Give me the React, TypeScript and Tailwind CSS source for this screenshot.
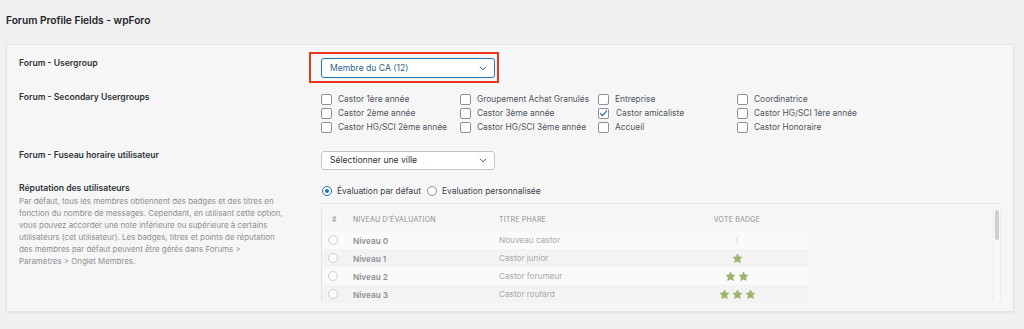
import React from "react";

const font = { fontFamily: "Inter, 'Noto Sans', sans-serif" };

function Chevron({ color = "#50575e" }: { color?: string }) {
  return (
    <svg width="8" height="5" viewBox="0 0 9 6" fill="none">
      <path d="M1 1.2 L4.5 4.6 L8 1.2" stroke={color} strokeWidth="1.2" strokeLinecap="round" strokeLinejoin="round" />
    </svg>
  );
}

function Checkbox({ checked = false }: { checked?: boolean }) {
  return (
    <span className="flex h-[11px] w-[11px] shrink-0 items-center justify-center rounded-[2px] border border-[#8c8f94] bg-white">
      {checked && (
        <svg width="9" height="9" viewBox="0 0 10 10">
          <path d="M1.8 5.2 L4 7.4 L8.4 2" stroke="#2271b1" strokeWidth="1.4" fill="none" strokeLinecap="round" strokeLinejoin="round" />
        </svg>
      )}
    </span>
  );
}

function Star({ size = 11 }: { size?: number }) {
  return (
    <svg width={size} height={size} viewBox="0 0 24 24">
      <path
        d="M12 2.5 L14.9 8.6 L21.5 9.4 L16.6 14 L17.9 20.6 L12 17.3 L6.1 20.6 L7.4 14 L2.5 9.4 L9.1 8.6 Z"
        fill="#9db56b"
        stroke="#9db56b"
        strokeWidth="2"
        strokeLinejoin="round"
      />
    </svg>
  );
}

function FaintStar() {
  return (
    <svg width="8" height="10" viewBox="0 0 8 10">
      <path d="M5.5 1.5 L3.2 4.2 L5 5.2 L3.6 8.6" stroke="#d6d6d6" strokeWidth="0.9" fill="none" strokeLinecap="round" />
    </svg>
  );
}

const groups: [string, boolean][][] = [
  [["Castor 1ère année", false], ["Castor 2ème année", false], ["Castor HG/SCI 2ème année", false]],
  [["Groupement Achat Granulés", false], ["Castor 3ème année", false], ["Castor HG/SCI 3ème année", false]],
  [["Entreprise", false], ["Castor amicaliste", true], ["Accueil", false]],
  [["Coordinatrice", false], ["Castor HG/SCI 1ère année", false], ["Castor Honoraire", false]],
];
const colWidths = ["w-[139px]", "w-[138px]", "w-[139px]", "w-[140px]"];

const levels = [
  { n: "Niveau 0", t: "Nouveau castor", stars: 0, bg: "bg-[#fafafa]" },
  { n: "Niveau 1", t: "Castor junior", stars: 1, bg: "bg-[#f3f3f3]" },
  { n: "Niveau 2", t: "Castor forumeur", stars: 2, bg: "bg-[#fafafa]" },
  { n: "Niveau 3", t: "Castor routard", stars: 3, bg: "bg-[#f3f3f3]" },
];

const descLines = [
  "Par défaut, tous les membres obtiennent des badges et des titres en",
  "fonction du nombre de messages. Cependant, en utilisant cette option,",
  "vous pouvez accorder une note inférieure ou supérieure à certains",
  "utilisateurs (cet utilisateur). Les badges, titres et points de réputation",
  "des membres par défaut peuvent être gérés dans Forums >",
  "Paramètres > Onglet Membres.",
];

export default function App() {
  return (
    <div style={font} className="h-[329px] w-[1024px] overflow-hidden bg-[#f0f0f1] px-[6px]">
      <div className="pt-[13px] text-[10.2px] font-semibold leading-[14px] text-[#1d2327]">
        Forum Profile Fields - wpForo
      </div>

      <div className="mt-[17px] h-[268px] w-[1008px] overflow-hidden border border-[#e4e4e4] bg-[#f6f6f6] pl-[12px] shadow-[0_1px_2px_rgba(0,0,0,0.06)]">
        {/* Row 1 */}
        <div className="mt-[12px] flex">
          <div className="w-[302px] text-[8.6px] font-semibold leading-[12px] text-[#2c3338]">Forum - Usergroup</div>
          <div className="relative mt-[1px]">
            <div className="flex h-[20px] w-[174px] items-center justify-between rounded-[3px] border border-[#2271b1] bg-white pl-[8px] pr-[7px] text-[8.6px] text-[#2c5f8f]">
              <span>Membre du CA (12)</span>
              <Chevron color="#2c5f8f" />
            </div>
            <div className="pointer-events-none absolute left-[-12px] top-[-6px] h-[31px] w-[190px] border-2 border-[#e8361f]" />
          </div>
        </div>

        {/* Row 2 */}
        <div className="mt-[13px] flex">
          <div className="w-[302px] text-[8.6px] font-semibold leading-[12px] text-[#2c3338]">
            Forum - Secondary Usergroups
          </div>
          <div className="flex pt-[1px]">
            {groups.map((col, ci) => (
              <div key={ci} className={`${colWidths[ci]} flex flex-col`}>
                {col.map(([label, checked]) => (
                  <div key={label} className="flex h-[14px] items-center gap-[6px] text-[8.4px] text-[#50575e]">
                    <Checkbox checked={checked} />
                    <span className={checked ? "ml-[1px]" : ""}>{label}</span>
                  </div>
                ))}
              </div>
            ))}
          </div>
        </div>

        {/* Row 3 */}
        <div className="mt-[17px] flex">
          <div className="-mt-[2px] w-[302px] text-[8.6px] font-semibold leading-[12px] text-[#2c3338]">
            Forum - Fuseau horaire utilisateur
          </div>
          <div className="flex h-[19px] w-[174px] items-center justify-between rounded-[3px] border border-[#c3c4c7] bg-white pl-[8px] pr-[7px] text-[8.6px] text-[#2c3338]">
            <span>Sélectionner une ville</span>
            <Chevron />
          </div>
        </div>

        {/* Row 4 */}
        <div className="mt-[12px] flex">
          <div className="w-[302px]">
            <div className="text-[8.6px] font-semibold leading-[12px] text-[#2c3338]">Réputation des utilisateurs</div>
            <div className="mt-[1px] text-[7.9px] leading-[12px] text-[#8c8f94]">
              {descLines.map((l) => (
                <div key={l}>{l}</div>
              ))}
            </div>
          </div>
          <div className="w-[681px]">
            <div className="flex h-[15px] items-center pl-[1px] pt-[3px] text-[8.4px] text-[#3c434a]">
              <span className="flex h-[10px] w-[10px] items-center justify-center rounded-full border border-[#2271b1] bg-white">
                <span className="h-[4px] w-[4px] rounded-full bg-[#2271b1]" />
              </span>
              <span className="ml-[5px]">Évaluation par défaut</span>
              <span className="ml-[6px] h-[10px] w-[10px] rounded-full border border-[#8c8f94] bg-white" />
              <span className="ml-[5px]">Evaluation personnalisée</span>
            </div>
            <div className="mt-[6px] border-t border-dotted border-[#d8d8d8]" />
            <div className="mt-[5px] flex h-[92px]">
              <div className="w-[488px] border-l border-[#e2e2e2]">
                <div className="flex h-[22px] items-center text-[7px] uppercase tracking-[0.2px] text-[#8c8f94]">
                  <span className="w-[31px] pl-[10px]">#</span>
                  <span className="w-[146px]">Niveau d'évaluation</span>
                  <span className="w-[190px]">Titre phare</span>
                  <span className="w-[96px] text-center">Vote badge</span>
                </div>
                {levels.map((lv) => (
                  <div key={lv.n} className={`flex h-[18px] items-center ${lv.bg}`}>
                    <span className="flex w-[31px] pl-[6px]">
                      <span className="h-[10px] w-[10px] rounded-full border border-[#d0d0d0] bg-[#fbfbfb]" />
                    </span>
                    <span className="w-[146px] pt-[2px] text-[8.2px] font-semibold text-[#8c8f94]">{lv.n}</span>
                    <span className="w-[190px] text-[8.2px] text-[#a7aaad]">{lv.t}</span>
                    <span className="flex w-[96px] justify-center gap-[2px]">
                      {lv.stars === 0 ? <FaintStar /> : Array.from({ length: lv.stars }).map((_, i) => <Star key={i} />)}
                    </span>
                  </div>
                ))}
              </div>
              <div className="flex-1" />
              <div className="mr-[1px] w-[8px] border-x border-[#ececec] bg-[#f8f8f8] pt-[1px]">
                <div className="mx-auto h-[30px] w-[4px] rounded-full bg-[#cfcfcf]" />
              </div>
            </div>
          </div>
        </div>
      </div>
    </div>
  );
}
